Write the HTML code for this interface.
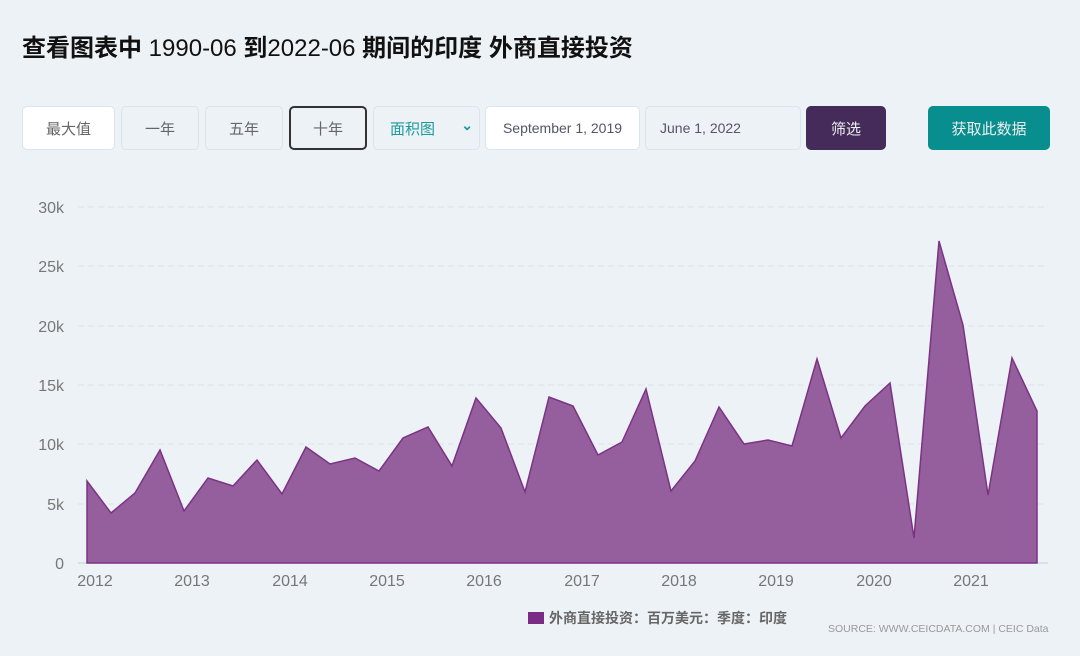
<!DOCTYPE html>
<html><head><meta charset="utf-8"><style>
body{margin:0;width:1080px;height:656px;background:#edf2f7;font-family:"Liberation Sans","Noto Sans CJK SC",sans-serif;position:relative;overflow:hidden}
.t{position:absolute;left:22px;top:28px;font-size:24px;font-weight:bold;color:#111;white-space:nowrap}
.b{position:absolute;top:106px;height:44px;box-sizing:border-box;border:1px solid #d9e4ec;border-radius:5px;background:#edf2f7;color:#666;font-size:15px;display:flex;align-items:center;justify-content:center}
.w{background:#fff}
</style></head><body>
<div class="t">查看图表中 <span style="font-weight:normal">1990-06</span> 到<span style="font-weight:normal">2022-06</span> 期间的印度 外商直接投资</div>
<div class="b w" style="left:22px;width:93px">最大值</div>
<div class="b" style="left:121px;width:78px">一年</div>
<div class="b" style="left:205px;width:78px">五年</div>
<div class="b" style="left:289px;width:78px;border:2px solid #333">十年</div>
<div class="b" style="left:373px;width:107px;color:#1a9a9a;justify-content:flex-start;padding-left:16px">面积图<span style="position:absolute;right:6px;top:10px;font-size:14px;font-weight:bold">&#8964;</span></div>
<div class="b w" style="left:485px;width:155px;font-size:14px;color:#556">September 1, 2019</div>
<div class="b" style="left:645px;width:156px;font-size:14px;color:#556;justify-content:flex-start;padding-left:14px">June 1, 2022</div>
<div class="b" style="left:806px;width:80px;background:#442b5a;border-color:#442b5a;color:#eee">筛选</div>
<div class="b" style="left:928px;width:122px;background:#088e8e;border-color:#088e8e;color:#eee">获取此数据</div>
<svg width="1080" height="656" style="position:absolute;left:0;top:0">
<g stroke="#dde3e9" stroke-dasharray="6,4">
<line x1="78" x2="1048" y1="207" y2="207"/><line x1="78" x2="1048" y1="266" y2="266"/><line x1="78" x2="1048" y1="326" y2="326"/><line x1="78" x2="1048" y1="385" y2="385"/><line x1="78" x2="1048" y1="444" y2="444"/><line x1="78" x2="1048" y1="504" y2="504"/></g>
<line x1="78" x2="1048" y1="563" y2="563" stroke="#ccd"/>
<g font-size="16" fill="#777" text-anchor="end"><text x="64" y="213">30k</text><text x="64" y="272">25k</text><text x="64" y="332">20k</text><text x="64" y="391">15k</text><text x="64" y="450">10k</text><text x="64" y="510">5k</text><text x="64" y="569">0</text></g>
<polygon fill="#955e9c" stroke="#7b3384" stroke-width="1.5" points="87,563 87,481 111,513 135,493 160,450 184,511 208,478 233,486 257,460 282,494 306,447 330,464 355,458 379,471 403,438 428,427 452,466 476,398 501,428 525,492 549,397 573,406 598,455 622,442 646,389 671,491 695,461 719,407 744,444 768,440 792,446 817,359 841,438 865,406 890,383 914,538 939,241 963,325 988,495 1012,358 1037,411 1037,563"/>
<g font-size="16" fill="#777" text-anchor="middle"><text x="95" y="586">2012</text><text x="192" y="586">2013</text><text x="290" y="586">2014</text><text x="387" y="586">2015</text><text x="484" y="586">2016</text><text x="582" y="586">2017</text><text x="679" y="586">2018</text><text x="776" y="586">2019</text><text x="874" y="586">2020</text><text x="971" y="586">2021</text></g>
<rect x="528" y="612" width="16" height="12" fill="#7b2d85"/>
<text x="549" y="623" font-size="14" font-weight="bold" fill="#666">外商直接投资：百万美元：季度：印度</text>
<text x="828" y="632" font-size="10.5" fill="#999">SOURCE: WWW.CEICDATA.COM | CEIC Data</text>
</svg>
</body></html>
